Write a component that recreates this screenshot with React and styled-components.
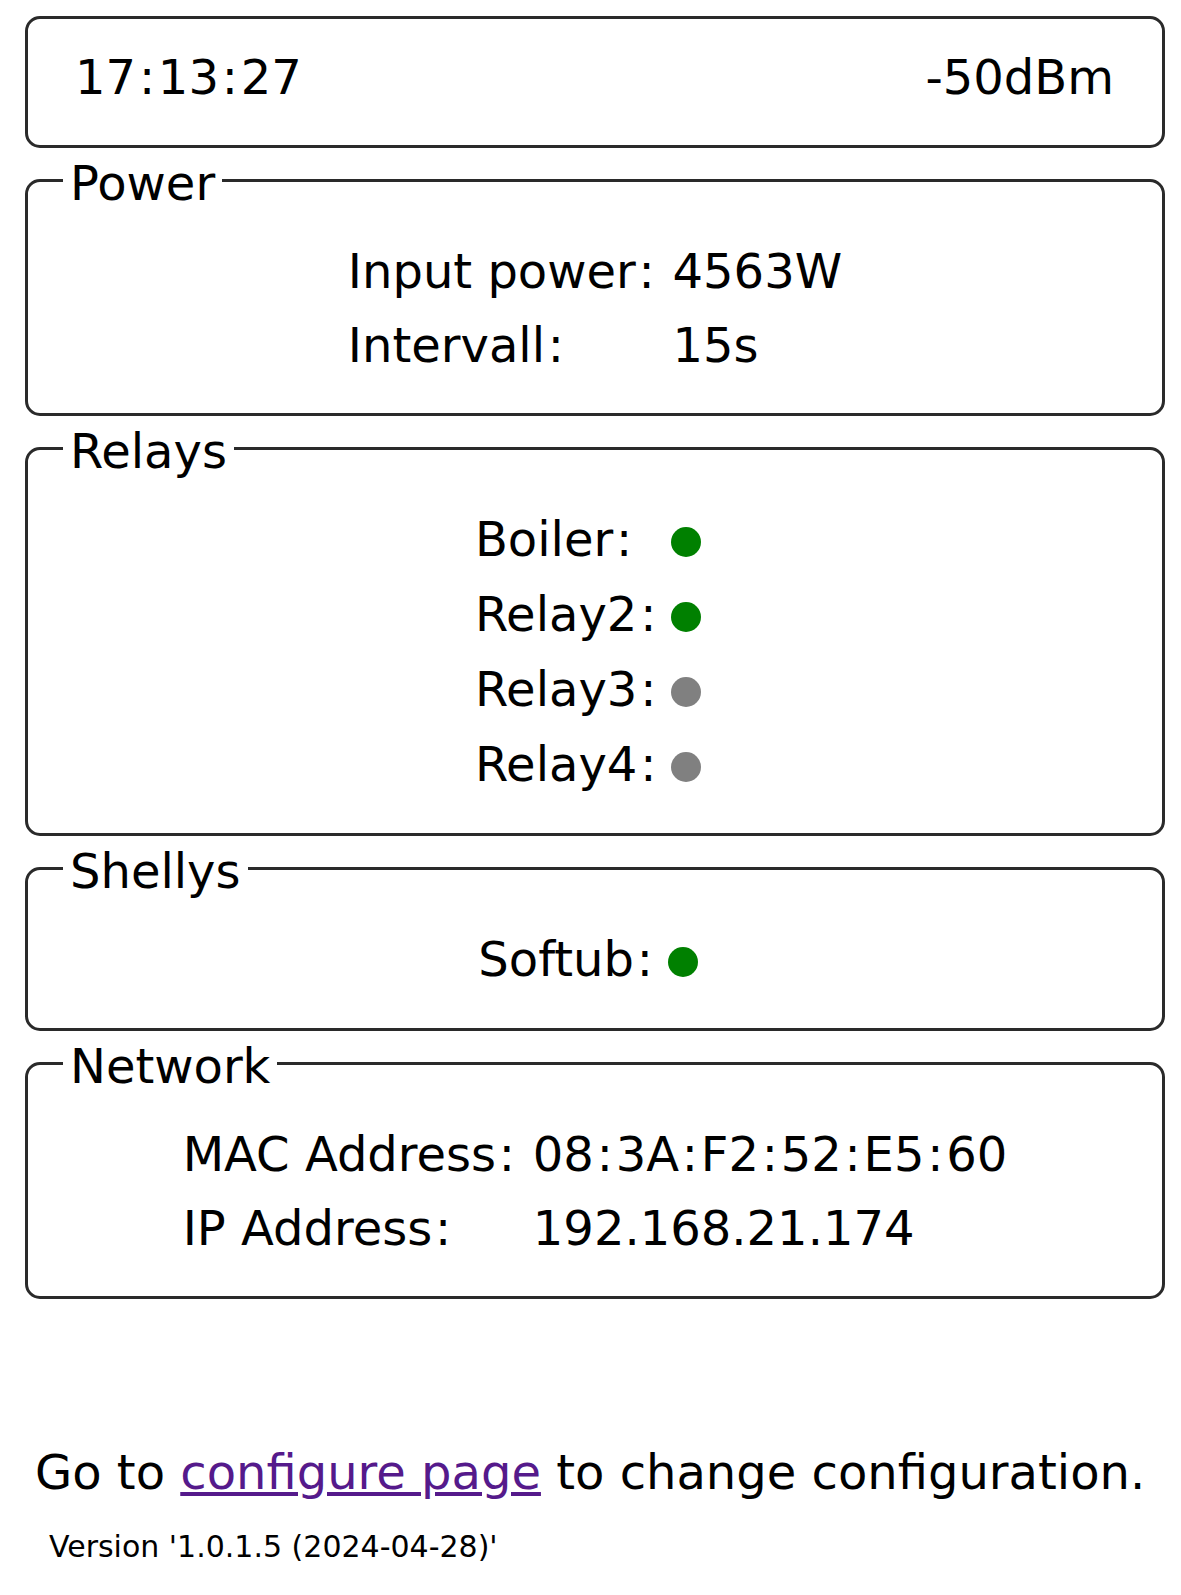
import { createGlobalStyle, styled } from 'styled-components'

const GlobalStyle = createGlobalStyle`
  body {
    margin: 0;
    background: #fff;
    color: #000;
    font-family: Verdana, 'DejaVu Sans', sans-serif;
  }
`

const power = [
  ['Input power:', '4563W'],
  ['Intervall:', '15s'],
]

const relays = [
  ['Boiler:', true],
  ['Relay2:', true],
  ['Relay3:', false],
  ['Relay4:', false],
]

const shellys = [['Softub:', true]]

const network = [
  ['MAC Address:', '08:3A:F2:52:E5:60'],
  ['IP Address:', '192.168.21.174'],
]

const spaced = (text) =>
  text
    .split(/(:)/)
    .map((part, i) => (part === ':' ? <Colon key={i}>:</Colon> : part))

function App() {
  return (
    <>
      <GlobalStyle />
      <Page>
        <StatusBar>
          <span>{spaced('17:13:27')}</span>
          <span>-50dBm</span>
        </StatusBar>

        <Group>
          <Legend>Power</Legend>
          <InfoGrid>
            {power.map(([label, value]) => (
              <Row key={label}>
                <span>{spaced(label)}</span>
                <span>{value}</span>
              </Row>
            ))}
          </InfoGrid>
        </Group>

        <Group>
          <Legend>Relays</Legend>
          <StateGrid>
            {relays.map(([label, on]) => (
              <Row key={label}>
                <span>{spaced(label)}</span>
                <Dot $on={on} />
              </Row>
            ))}
          </StateGrid>
        </Group>

        <Group>
          <Legend>Shellys</Legend>
          <StateGrid>
            {shellys.map(([label, on]) => (
              <Row key={label}>
                <span>{spaced(label)}</span>
                <Dot $on={on} />
              </Row>
            ))}
          </StateGrid>
        </Group>

        <Group>
          <Legend>Network</Legend>
          <InfoGrid>
            {network.map(([label, value]) => (
              <Row key={label}>
                <span>{spaced(label)}</span>
                <span>{spaced(value)}</span>
              </Row>
            ))}
          </InfoGrid>
        </Group>

        <Footer>
          Go to <a href='#config'>configure page</a> to change configuration.
        </Footer>
        <Version>Version '1.0.1.5 (2024-04-28)'</Version>
      </Page>
    </>
  )
}

export default App

const Page = styled.div`
  padding: 16px 16px 40px 25px;
  display: flex;
  flex-direction: column;
  gap: 3px;
`

const Colon = styled.span`
  padding: 0 2.8px;
`

const StatusBar = styled.div`
  height: 132px;
  box-sizing: border-box;
  border: 3px solid #2a2a2a;
  border-radius: 15px;
  padding: 0 48px 11px 47px;
  display: flex;
  align-items: center;
  justify-content: space-between;
  font-size: 48px;
`

const Group = styled.fieldset`
  margin: 0;
  border: 3px solid #2a2a2a;
  border-radius: 15px;
  padding: 24px 0 31px;
  min-width: 0;
`

const Legend = styled.legend`
  margin-left: 35px;
  padding: 6px 7px 0;
  font-size: 48px;
  line-height: 53px;
`

const InfoGrid = styled.div`
  display: grid;
  grid-template-columns: auto auto;
  justify-content: center;
  column-gap: 15px;
  font-size: 48px;
  line-height: 74px;
`

const StateGrid = styled(InfoGrid)`
  column-gap: 12px;
  line-height: 75px;
`

const Row = styled.div`
  display: contents;
`

const Dot = styled.span`
  align-self: center;
  width: 30px;
  height: 30px;
  margin: 4px 14px 0 0;
  border-radius: 50%;
  background: ${(p) => (p.$on ? '#008000' : '#808080')};
`

const Footer = styled.p`
  margin: 142px 0 0 10px;
  font-size: 48px;

  & a {
    color: #551a8b;
  }
`

const Version = styled.p`
  margin: 26px 0 0 24px;
  font-size: 30px;
`
